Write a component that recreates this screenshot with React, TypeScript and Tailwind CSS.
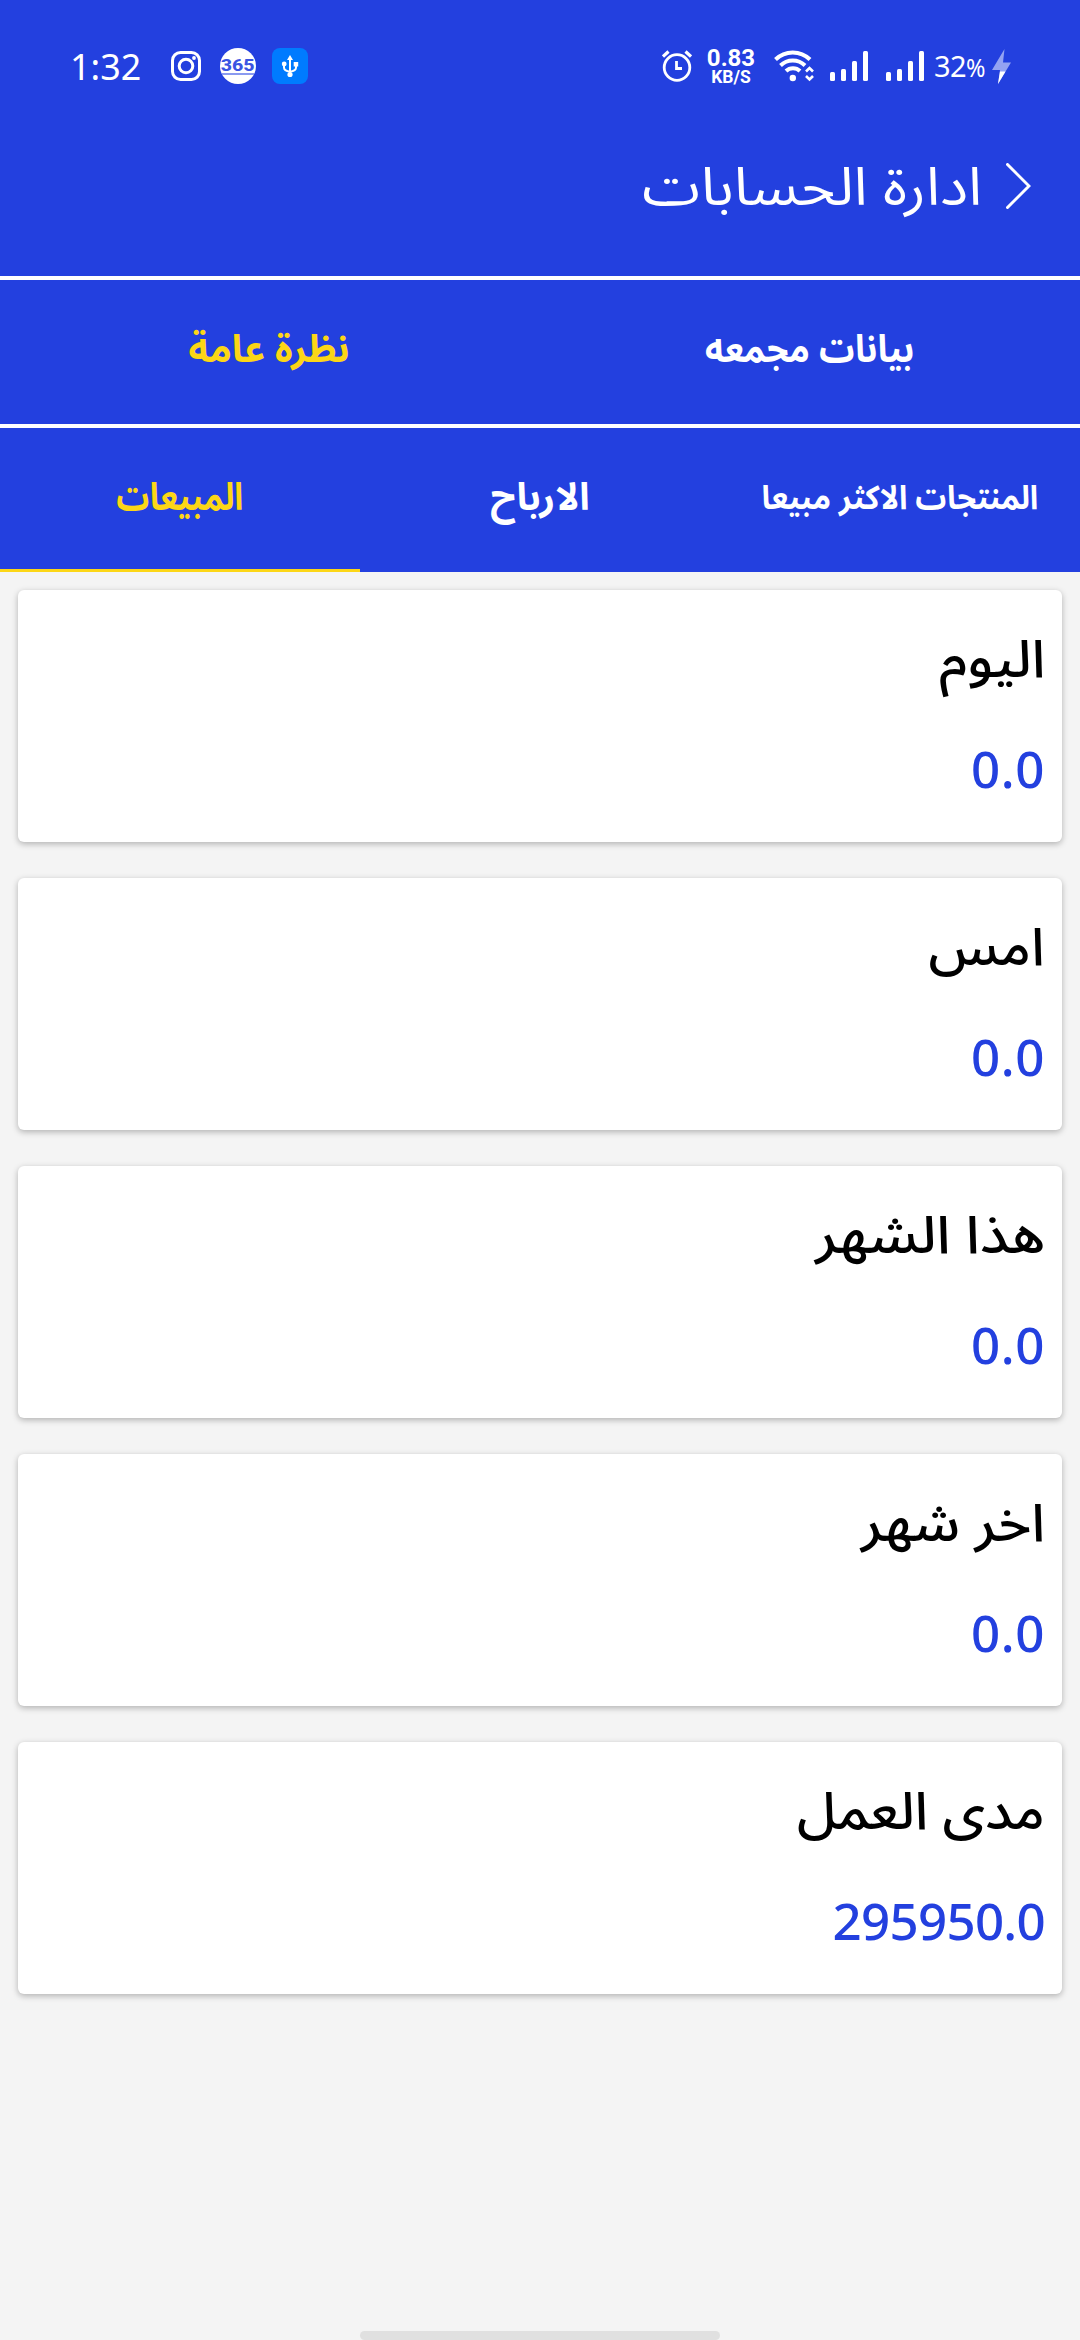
import React from "react";

const cards = [
  { title: "اليوم", value: "0.0", stretch: "scale-x-[1.08]", tracking: "tracking-[0.6px]" },
  { title: "امس", value: "0.0", stretch: "scale-x-[1.06]", tracking: "tracking-[0.6px]" },
  { title: "هذا الشهر", value: "0.0", stretch: "scale-x-[1.105]", tracking: "tracking-[0.6px]" },
  { title: "اخر شهر", value: "0.0", stretch: "scale-x-[1.076]", tracking: "tracking-[0.6px]" },
  { title: "مدى العمل", value: "295950.0", stretch: "scale-x-[1.055]", tracking: "tracking-[-0.7px]" },
];

function SignalBars() {
  return (
    <svg className="h-[30px] w-[38px]" viewBox="0 0 38 30" fill="white">
      <rect x="0" y="21" width="5" height="9" rx="1.5" />
      <rect x="11" y="18" width="5" height="12" rx="1.5" />
      <rect x="22" y="10" width="5" height="20" rx="1.5" />
      <rect x="33" y="0" width="5" height="30" rx="1.5" />
    </svg>
  );
}

function StatusBar() {
  return (
    <div dir="ltr" className="flex h-[132px] items-center justify-between pl-[70px] pr-[69px] text-white">
      <div className="flex items-center">
        <span className="w-[101px] origin-left scale-x-[0.97] pb-[2px] font-['Noto_Sans'] text-[37px] leading-none font-[380] whitespace-nowrap">1:32</span>
        <svg className="size-[30px]" viewBox="0 0 30 30" fill="none" stroke="white" strokeWidth="3">
          <rect x="1.5" y="1.5" width="27" height="27" rx="8" />
          <circle cx="15" cy="15" r="6.8" />
          <circle cx="23" cy="7" r="1.9" fill="white" stroke="none" />
        </svg>
        <span className="ml-[19px] flex size-9 flex-col items-center justify-center rounded-full bg-white">
          <span className="scale-x-[1.15] font-['Roboto'] text-[17px] leading-[14px] font-extrabold text-[#3a54e2]">365</span>
          <span className="mt-px h-[2px] w-8 bg-[#8a9af0]" />
        </span>
        <svg className="ml-4 size-9" viewBox="0 0 36 36">
          <rect width="36" height="36" rx="8" fill="#007bff" />
          <path d="M18 10v18M12 17v2.5q0 3.5 6 4.2M24 17v2.5q0 3.500-6 4.200" fill="none" stroke="white" strokeWidth="2" />
          <path d="M18 7l3 5h-6z" fill="white" />
          <circle cx="12.2" cy="16" r="2.4" fill="white" />
          <rect x="21.7" y="14" width="4.5" height="4.5" fill="white" />
          <circle cx="18" cy="26.5" r="2.6" fill="white" />
        </svg>
      </div>
      <div className="flex items-center">
        <svg className="h-[32px] w-[30px]" viewBox="0 0 30 32" fill="none" stroke="white" strokeWidth="2.8">
          <circle cx="15" cy="17.5" r="12.8" />
          <path d="M14.5 11v7.5h5.5" />
          <path d="M1 6.5l5.5-5M29 6.5l-5.5-5" strokeWidth="3.2" />
        </svg>
        <div className="ml-[13px] flex w-[52px] flex-col items-center pt-[1.5px] font-['Roboto'] font-bold">
          <span className="text-[24px] leading-[19px]">0.83</span>
          <span className="mt-[1.5px] text-[17.5px] leading-[16px]">KB/S</span>
        </div>
        <svg className="ml-[17px] h-[32px] w-[40px]" viewBox="0 0 40 32" fill="none" stroke="white" strokeWidth="4">
          <path d="M1.500 9.500a24.500 24.500 0 0 1 34.500 0" />
          <path d="M6.500 15.500a17.500 17.500 0 0 1 24.500 0" />
          <path d="M12 21a10 10 0 0 1 14 0" />
          <circle cx="18.8" cy="28" r="3.2" fill="white" stroke="none" />
          <path d="M32 21.500l3.500-3.500l3.500 3.500M32 26l3.500 3.500l3.500-3.500" strokeWidth="2.6" />
        </svg>
        <div className="ml-4"><SignalBars /></div>
        <div className="ml-[18px]"><SignalBars /></div>
        <div className="ml-[10px] flex w-[55px] items-baseline pb-[2px] font-['Noto_Sans'] leading-none font-[380] whitespace-nowrap">
          <span className="text-[29px] tracking-[-0.5px]">32</span>
          <span className="origin-left scale-x-90 text-[26px]">%</span>
        </div>
        <svg className="ml-[3px] h-[35px] w-[19px]" viewBox="0 0 19 35">
          <path d="M12.5 0L0 21h8L6 35L19 13.500h-8z" fill="#94a3f2" />
          <path d="M8 22.500h5.500L6 35z" fill="white" />
        </svg>
      </div>
    </div>
  );
}

function Card({ title, value, stretch, tracking }: (typeof cards)[number]) {
  return (
    <section className="flex h-[252px] flex-col rounded-[6px] bg-white px-[17px] pt-[35px] shadow-[0_2px_6px_rgba(0,0,0,0.28)]">
      <h2 className={`flex h-[72px] w-fit origin-right items-center text-[52px] leading-none font-medium whitespace-nowrap text-black ${stretch}`}>
        {title}
      </h2>
      <p dir="ltr" className={`mt-[35px] flex h-[72px] w-fit items-center font-['Noto_Sans'] text-[51px] leading-none font-medium text-[#2340df] ${tracking}`}>
        {value}
      </p>
    </section>
  );
}

export default function App() {
  return (
    <div dir="rtl" className="flex h-[2340px] w-[1080px] flex-col overflow-hidden bg-[#f4f4f4] font-['Noto_Sans_Arabic','Noto_Sans',sans-serif]">
      <header className="bg-[#2340df] text-white">
        <StatusBar />
        <div className="flex h-[144px] items-start pt-[16px] pr-[49px]">
          <svg className="mt-[15px] h-[46px] w-[25px]" viewBox="0 0 25 46" fill="none" stroke="white" strokeWidth="3" strokeLinecap="round">
            <path d="M1.5 1.5L23 23L1.5 44.5" />
          </svg>
          <h1 className="mt-[2px] mr-[24px] flex h-[76px] origin-right scale-x-[1.11] items-center text-[53px] leading-none font-[370] whitespace-nowrap">
            ادارة الحسابات
          </h1>
        </div>
        <nav className="grid h-[148px] grid-cols-2 border-t-4 border-white pb-1 text-[38px] leading-none font-bold">
          <div className="flex items-center justify-center">
            <span className="scale-x-[0.928]">بيانات مجمعه</span>
          </div>
          <div className="flex items-center justify-center pr-[2px] text-[#fcd616]">
            <span>نظرة عامة</span>
          </div>
        </nav>
        <nav className="grid h-[148px] grid-cols-3 border-t-4 border-white text-[38px] leading-none font-bold">
          <div className="flex items-center justify-center pb-[3px] text-[33px]">
            <span className="scale-x-[0.935] whitespace-nowrap">المنتجات الاكثر مبيعا</span>
          </div>
          <div className="flex items-center justify-center pb-[4px]">
            <span>الارباح</span>
          </div>
          <div className="flex items-center justify-center border-b-[3px] border-[#fcd616] pb-px text-[#fcd616]">
            <span className="scale-x-[0.862]">المبيعات</span>
          </div>
        </nav>
      </header>
      <main className="flex flex-1 flex-col gap-9 px-[18px] pt-[18px]">
        {cards.map((c) => (
          <Card key={c.title} {...c} />
        ))}
      </main>
      <div className="mx-auto h-[9px] w-[360px] rounded-full bg-[#e0e0e0]" />
    </div>
  );
}
